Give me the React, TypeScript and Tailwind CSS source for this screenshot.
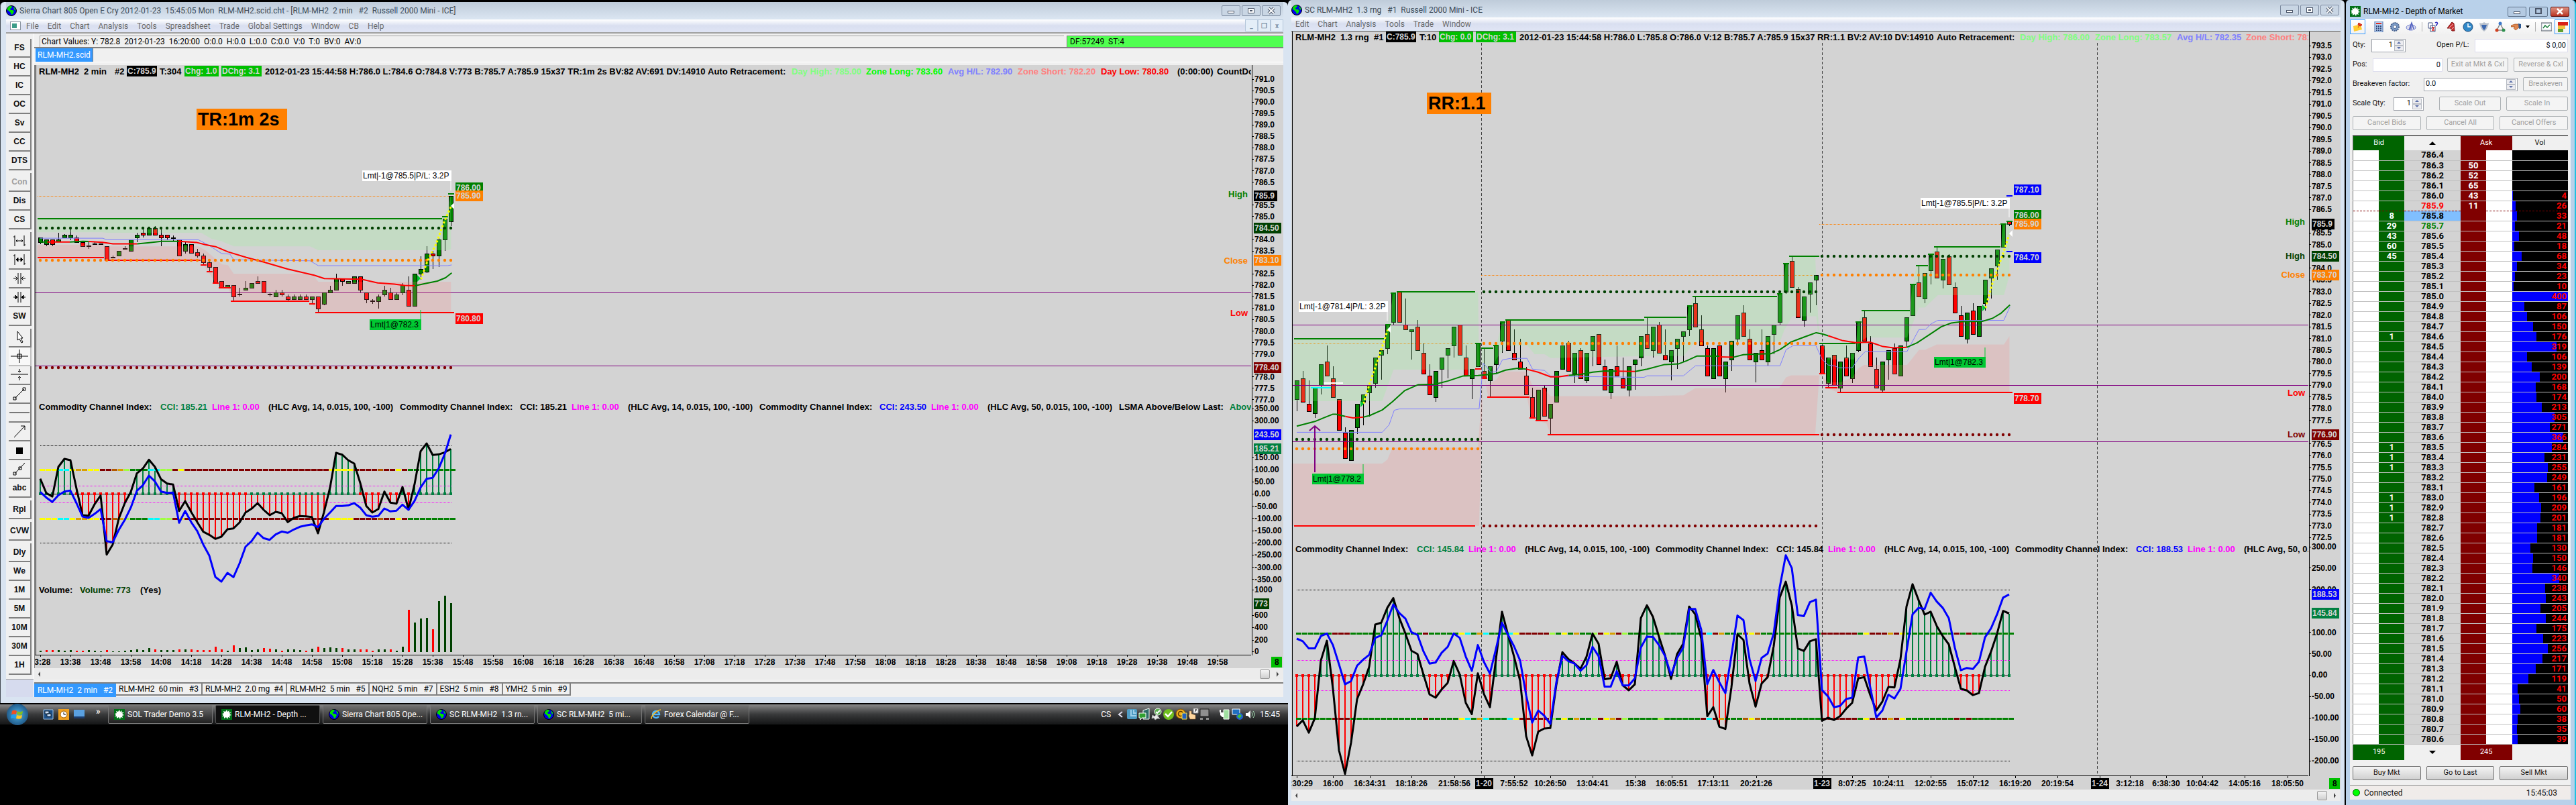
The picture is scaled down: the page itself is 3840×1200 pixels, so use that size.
import type { ReactNode } from "react";

type Map1 = (u: number) => number;

// plot units -> canvas pixels, left chart
const ax: Map1 = (u) => u * 0.6122;
const ay: Map1 = (u) => u * 0.38265;
const acy: Map1 = (u) => 560 + u / 3;
const aBar: Map1 = (i) => 60 + i * 9;

// plot units -> canvas pixels, right chart
const bx: Map1 = (u) => 1910 + u * 0.5102;
const bx2: Map1 = (u) => 2700 + u * 0.5102;
const by: Map1 = (u) => u * 0.38265;
const bcy: Map1 = (u) => 600 + u * 0.38265;
const bBar: Map1 = (i) => 1933 + i * 9;

const nums = (s: string) => s.trim().split(/\s+/).map(Number);

function pts(s: string, fx: Map1, fy: Map1) {
  return s
    .trim()
    .split(/\s+/)
    .map((p) => {
      const [x, y] = p.split(",").map(Number);
      return `${fx(x).toFixed(1)},${fy(y).toFixed(1)}`;
    })
    .join(" ");
}

// colour + body top : body bottom : high : low (0 = same as body)
const CANDLES_A = `g926:944:0:950 g935:952:0:958 r935:952:0:958 g934:943:906:0 g916:926:912:0 g916:926:895:935 r926:944:916:0
r944:960:0:0 r959:961:944:970 r951:952:944:0 r951:952:0:0 r961:1014:0:0 g1003:1004:995:0 g978:997:0:0 g969:970:960:0 g935:978:0:0
g916:926:906:943 r908:915:895:925 g889:915:0:0 r889:915:880:0 r916:926:895:958 r916:926:0:935 r926:927:916:940 r935:997:0:0
g952:978:944:987 r952:987:0:0 r985:996:970:1003 r996:1022:988:1032 r1022:1041:1015:1058 r1041:1102:0:0 r1096:1120:0:0 g1111:1120:0:0
r1111:1156:0:1173 g1147:1148:1120:1156 g1122:1130:1096:0 g1104:1123:0:0 r1096:1104:1076:0 r1096:1140:0:0 r1147:1148:1140:1156
g1140:1157:1130:0 r1140:1148:1130:1156 r1157:1166:1148:1173 g1157:1166:1148:0 g1157:1166:1148:0 r1157:1166:1148:0 g1157:1166:0:1185
r1157:1203:0:1216 g1140:1185:0:1190 g1130:1140:1112:0 g1086:1130:1066:0 r1088:1096:0:1112 g1096:1104:0:0 g1078:1104:0:0
r1078:1130:0:1140 r1140:1166:0:1180 r1173:1174:1166:1185 g1157:1175:1148:1203 g1130:1148:1112:1156 r1140:1166:1122:0
g1148:1166:1140:0 g1112:1140:1104:1150 r1130:1193:1078:0 g1067:1193:0:0 g1049:1067:997:1090 g988:1059:960:1063 r988:997:978:1048
g934:997:925:1040 g852:934:0:978 g764:863:0:880`;

const CANDLES_B = `g1483:1556:0:1601 r1475:1566:1445:0 r1574:1603:1483:0 g1512:1610:0:1627 g1420:1502:0:1537 r1410:1465:1346:0
r1475:1548:1428:0 r1557:1676:0:0 r1686:1786:1664:0 g1676:1793:0:0 g1574:1666:0:1692 g1538:1568:0:1656 g1502:1530:0:1622
g1394:1493:0:1510 g1366:1383:0:1480 g1264:1357:0:1381 g1143:1255:0:1266 r1137:1255:0:0 r1266:1284:1163:0 g1284:1293:0:1400
r1274:1365:1246:0 r1376:1456:1338:0 r1465:1538:1420:0 g1447:1548:0:1565 g1394:1438:0:1510 g1357:1383:0:1473 g1274:1347:0:1393
r1266:1383:0:0 r1394:1465:1346:0 g1438:1475:0:1555 g1337:1428:0:0 r1447:1473:1357:0 g1428:1483:0:1545 g1347:1420:0:1455
g1255:1328:0:1375 r1247:1365:0:0 r1376:1402:1284:0 r1410:1438:1320:0 r1465:1537:1430:0 r1549:1627:1510:0 g1520:1638:0:0
r1512:1621:1502:0 g1574:1630:0:1691 g1447:1566:0:0 g1347:1438:0:0 r1338:1447:1328:0 g1376:1456:0:1492 r1366:1475:1357:0
g1376:1483:0:1492 g1310:1366:0:1428 r1303:1420:0:0 r1428:1519:1400:0 g1438:1530:0:1555 r1428:1465:1346:0 r1475:1511:1393:0
g1428:1519:0:1545 g1402:1420:0:1518 g1310:1394:0:1428 r1302:1357:1237:0 g1274:1365:0:1392 r1266:1375:1255:0 r1383:1402:1284:0
g1365:1410:0:1482 g1321:1357:0:1437 g1293:1310:0:1412 g1190:1284:0:1310 r1182:1273:1155:0 r1285:1347:1228:0 r1357:1465:1346:0
g1357:1475:0:0 r1347:1465:0:0 g1410:1475:0:1528 g1329:1402:0:1445 g1229:1320:0:1345 r1219:1310:1190:0 r1321:1402:1284:0
g1376:1410:0:1490 r1365:1402:1284:0 g1310:1410:0:1425 g1267:1302:0:1380 g1144:1255:0:1266 g1027:1137:0:1145 r1018:1119:998:0
r1128:1237:1118:0 g1156:1247:0:1272 g1102:1145:0:1218 g1073:1090:0:1190 r1347:1455:0:0 g1394:1493:0:1510 r1383:1501:0:0
g1410:1511:0:1528 r1394:1465:1346:0 g1376:1475:0:1491 g1254:1365:0:1372 r1237:1329:1211:0 r1339:1428:1310:0 r1438:1511:1394:0
g1410:1519:0:1528 g1365:1402:0:1480 r1357:1456:1338:0 g1347:1465:0:0 g1238:1329:0:1350 g1110:1229:0:0 r1101:1157:1035:0
g1065:1165:0:1180 g991:1055:0:1108 r981:1084:963:0 g1010:1090:0:1125 r1000:1109:991:0 r1119:1218:1101:0 r1229:1310:1192:0
g1219:1320:0:1337 r1211:1302:1182:0 g1192:1310:0:0 g1091:1182:0:1210 g1046:1083:0:1162 g973:1035:0:1090 g873:962:0:0 r863:873:0:880`;

const CCI_A = nums(`461 525 541 408 372 378 505 624 626 575 536 800 755 640 570 520 437 415 376 408 463 482 487 605 561 610 655 698
712 730 720 687 683 657 612 595 570 600 624 609 615 655 636 628 629 632 705 610 500 345 353 378 393 480 583 612 596 518 568 572 498 598
485 338 303 355 352 343 328`);
const CCI50_A = nums(`520 545 565 535 518 514 570 630 636 618 597 740 745 690 645 590 515 490 447 473 518 524 523 658 605 655 695 755
805 900 921 882 901 840 765 740 702 727 734 710 697 703 688 676 670 665 677 640 612 583 583 580 570 590 624 631 627 594 607 604 577 600
560 500 461 457 415 350 263`);
const CCI_B = nums(`1262 1238 1286 1230 1005 928 1115 1355 1447 1325 1155 1098 1030 865 858 800 762 840 900 967 980 1060 1137 1150 1118
1092 1007 1060 1170 1214 1055 1135 1187 1000 815 905 990 1085 1300 1375 1282 1270 1268 1100 973 1000 1016 1037 990 900 940 1078 1074
1010 1102 1121 1098 840 790 835 912 985 1077 980 940 795 825 920 1222 1187 1263 1272 1110 903 925 1095 1185 1095 1070 950 760 698 790
958 968 930 922 1240 1228 1237 1222 1193 1170 1075 1070 1140 1200 1165 1108 1110 1000 795 708 770 826 815 870 910 942 1030 1115 1122
1140 1132 1030 970 900 812 822`);
const CCI50_B = nums(`920 930 958 958 910 900 945 1020 1098 1085 1025 1002 983 917 907 850 787 820 842 895 905 970 1017 1013 975 952
900 917 990 1045 945 1010 1056 960 858 905 950 1005 1140 1247 1200 1220 1252 1090 987 1008 1017 1045 1023 952 988 1107 1107 1047 1102
1102 1075 955 912 913 945 987 1062 995 955 805 804 885 1097 1042 1090 1132 985 830 848 1000 1085 995 978 900 720 595 645 828 832 778
768 1120 1145 1187 1182 1155 1150 993 990 1110 1227 1200 1138 1153 1115 970 825 800 804 741 775 800 840 955 1043 1034 1038 1010 915
880 825 760 748`);

const TREND_A = "yyyccyooyymmbolgggccllmy" + "m".repeat(24) + "yyyymmmmbmmym" + "g".repeat(8);
const TREND_B =
  "ggggggmmmggggggggggggmgggggycgocgggcymmmmmlgygoggl" + "myomlggggglggggggmcmogggbybgggggggggg" + "mmmmmmgymmmomyggggggggmgmggggggg";
const TICKS_A = "gggggg" + "r".repeat(9) + "g".repeat(8) + "r".repeat(12) + "g".repeat(18) + "rrrrgrrgr" + "g".repeat(7);

const TREND_COLORS: Record<string, string> = {
  y: "#ffff00",
  c: "#00ffff",
  o: "#d9a000",
  m: "#800000",
  b: "#b35a00",
  l: "#a0ff40",
  g: "#008000",
};

// negative = down bar
const VOLUME_A = nums(`5 -8 -8 8 5 8 -5 -5 8 5 2 -8 3 2 5 8 11 8 17 -11 8 8 8 -11 11 -11 -8 -8 -8 -23 -11 5 -29 17 22 8 11 -19 -14 11
-6 11 11 8 -5 14 -23 17 20 17 -17 11 11 -11 -11 -5 11 11 -11 5 23 -188 133 149 152 -101 227 253 218`);

function Candles({ data, bar, fy }: { data: string; bar: Map1; fy: Map1 }) {
  return (
    <g shapeRendering="crispEdges" stroke="#000">
      {data.trim().split(/\s+/).map((c, i) => {
        const [top, bottom, high, low] = c.slice(1).split(":").map(Number);
        const x = bar(i);
        return (
          <g key={i}>
            <line x1={x} x2={x} y1={fy(high || top)} y2={fy(low || bottom)} />
            <rect x={x - 3} y={fy(top)} width={6} height={Math.max(fy(bottom) - fy(top), 1)} fill={c[0] === "g" ? "#008000" : "#ff0000"} />
          </g>
        );
      })}
    </g>
  );
}

function Levels({ items, fx, fy, color }: { items: number[][]; fx: Map1; fy: Map1; color: string }) {
  return (
    <g stroke={color} strokeWidth={2} shapeRendering="crispEdges">
      {items.map(([x1, x2, y], i) => (
        <line key={i} x1={fx(x1)} x2={fx(x2)} y1={fy(y)} y2={fy(y)} />
      ))}
    </g>
  );
}

function Dots({ from, to, bar, y, color }: { from: number; to: number; bar: Map1; y: number; color: string }) {
  return (
    <g fill={color}>
      {Array.from({ length: to - from + 1 }, (_, i) => (
        <circle key={i} cx={bar(from + i)} cy={y} r={2.2} />
      ))}
    </g>
  );
}

function Lines({ items, fx, fy }: { items: [string, string][]; fx: Map1; fy: Map1 }) {
  return (
    <g fill="none" strokeWidth={2} strokeLinejoin="round">
      {items.map(([color, s], i) => (
        <polyline key={i} points={pts(s, fx, fy)} stroke={color} />
      ))}
    </g>
  );
}

function Cci({ a, b, trend, ticks, bar, fy, zero, bands }: {
  a: number[]; b: number[]; trend: string; ticks?: string; bar: Map1; fy: Map1; zero: number; bands: number[];
}) {
  const x0 = bar(0);
  const x1 = bar(a.length - 1);
  const [up2, up1, mUp, mDown, dn1, dn2] = bands;
  const line = (v: number[]) => v.map((y, i) => `${bar(i)},${fy(y).toFixed(1)}`).join(" ");
  return (
    <g>
      <g shapeRendering="crispEdges">
        {[up2, dn2].map((y) => (
          <line key={y} x1={x0} x2={x1 + 1} y1={fy(y)} y2={fy(y)} stroke="#000" strokeDasharray="1 1" />
        ))}
        {a.map((y, i) => (
          <line key={i} x1={bar(i)} x2={bar(i)} y1={fy(zero)} y2={fy(y)} stroke={y < zero ? "#008040" : "#ff0000"} strokeWidth={2} />
        ))}
        <line x1={x0} x2={x1 + 1} y1={fy(zero)} y2={fy(zero)} stroke="#000" />
        {a.map((y, i) => {
          const green = ticks ? ticks[i] === "g" : y < zero;
          return <rect key={i} x={bar(i) - 2} y={fy(zero) - 2} width={4} height={4} fill={green ? "#008040" : "#ff0000"} />;
        })}
        {[mUp, mDown].map((y) => (
          <line key={y} x1={x0} x2={x1 + 1} y1={fy(y)} y2={fy(y)} stroke="#ff00ff" strokeDasharray="1 1" />
        ))}
        {[up1, dn1].map((y) =>
          a.map((_, i) => (
            <rect key={`${y}-${i}`} x={bar(i) - 1} y={fy(y) - 1} width={8} height={3} fill={TREND_COLORS[trend[i] ?? "g"]} />
          ))
        )}
      </g>
      <polyline points={line(a)} fill="none" stroke="#000" strokeWidth={3} strokeLinejoin="round" />
      <polyline points={line(b)} fill="none" stroke="#0000ff" strokeWidth={3} strokeLinejoin="round" />
    </g>
  );
}

function Caption({ y, parts }: { y: number; parts: [number, string, string?][] }) {
  return (
    <g className="text-[13px]">
      {parts.map(([x, text, color], i) => (
        <text key={i} x={x} y={y} fill={color ?? "#000"} xmlSpace="preserve">{text}</text>
      ))}
    </g>
  );
}

function Tag({ x, y, w, bg, fg = "#d3d3d3", children }: { x: number; y: number; w: number; bg: string; fg?: string; children: ReactNode }) {
  return (
    <svg x={x} y={y - 8} width={w} height={16} overflow="hidden">
      <rect width={w} height={16} fill={bg} />
      <text x={1} y={12} fill={fg}>{children}</text>
    </svg>
  );
}

function AxisLabels({ x, items }: { x: number; items: [number, string][] }) {
  return (
    <g>
      {items.map(([y, t]) => (
        <g key={t}>
          <line x1={x - 4} x2={x - 1} y1={y} y2={y} stroke="#000" shapeRendering="crispEdges" />
          <text x={x} y={y + 4}>{t}</text>
        </g>
      ))}
    </g>
  );
}

const SVG_TEXT = "font-['Liberation_Sans',Arial,sans-serif] text-[12px] font-bold";

function SideLabels({ items }: { items: [number, string, string][] }) {
  return (
    <g className="text-[13px]">
      {items.map(([y, t, color]) => (
        <text key={`${t}${y}`} x="100%" dx={-5} y={y} textAnchor="end" fill={color}>{t}</text>
      ))}
    </g>
  );
}

function times(start: number, n: number) {
  return Array.from({ length: n }, (_, i) => {
    const m = start + i * 10;
    return `${Math.floor(m / 60)}:${String(m % 60).padStart(2, "0")}`;
  });
}

function LeftPlot() {
  return (
    <svg className={`h-[899px] min-w-0 flex-1 bg-[#d3d3d3] ${SVG_TEXT}`}>
      <g transform="translate(-52 -97)">
        <Caption
          y={111}
          parts={[
            [58, "RLM-MH2"], [125, "2 min"], [171, "#2"], [238, "T:304"],
            [395, "2012-01-23 15:44:58 H:786.0 L:784.6 O:784.8 V:773 B:785.7 A:785.9 15x37 TR:1m 2s BV:82 AV:691 DV:14910"],
            [1055, "Auto Retracement:"], [1180, "Day High: 785.00", "#80ff80"], [1291, "Zone Long: 783.60", "#00ff00"],
            [1413, "Avg H/L: 782.90", "#8080ff"], [1517, "Zone Short: 782.20", "#ff8080"], [1641, "Day Low: 780.80", "#ff0000"],
            [1755, "(0:00:00)"], [1814, "CountDown Timer:"],
          ]}
        />
        <Tag x={189} y={106} w={45} bg="#000">C:785.9</Tag>
        <Tag x={275} y={106} w={51} bg="#00c000">Chg: 1.0</Tag>
        <Tag x={330} y={106} w={60} bg="#00c000">DChg: 3.1</Tag>

        <rect x={293} y={162} width={135} height={32} fill="#ff8000" />
        <text x={295} y={187} className="text-[27px]">TR:1m 2s</text>

        <g shapeRendering="crispEdges" stroke="#800080" strokeWidth={1}>
          <line x1={52} x2={4000} y1={436} y2={436} />
          <line x1={52} x2={4000} y1={545} y2={545} />
        </g>
        <line x1={56} x2={676} y1={292} y2={292} stroke="#ff8000" strokeDasharray="1 1" shapeRendering="crispEdges" />
        <Candles data={CANDLES_A} bar={aBar} fy={ay} />
        <polygon
          fill="#8cff8c"
          fillOpacity={0.2}
          points={pts("91,852 1075,852 1083,845 1098,760 1098,970 1090,975 775,975 755,960 570,960 540,940 515,930 490,907 260,907 250,905 91,905", ax, ay)}
        />
        <polygon
          fill="#ff8282"
          fillOpacity={0.2}
          points={pts("91,953 250,953 260,960 483,960 500,975 540,1030 555,1033 569,1066 760,1066 775,1098 1098,1098 1098,1217 775,1217 760,1184 750,1173 569,1173 555,1120 535,1120 525,1102 496,1032 485,1014 260,1014 255,1003 91,1003", ax, ay)}
        />
        <Levels fx={ax} fy={ay} color="#008000" items={[[91, 1076, 852], [1076, 1091, 845], [1091, 1106, 755]]} />
        <Levels
          fx={ax}
          fy={ay}
          color="#ff0000"
          items={[
            [91, 253, 1003], [255, 488, 1014], [488, 503, 1032], [503, 518, 1058], [518, 532, 1102],
            [532, 562, 1121], [562, 753, 1173], [753, 768, 1184], [768, 1106, 1217],
          ]}
        />
        <polyline
          fill="none"
          stroke="#8080ff"
          points={pts("98,928 250,928 260,934 483,934 510,957 540,988 560,990 569,1012 755,1016 775,1035 1090,1035 1100,1032", ax, ay)}
        />
        <Lines
          fx={ax}
          fy={ay}
          items={[
            ["#008000", "98,943 115,943"],
            ["#ff0000", "115,943 170,943"],
            ["#008000", "170,943 202,940 216,941"],
            ["#ff0000", "216,941 250,944 275,950 334,950"],
            ["#008000", "334,950 360,946 393,940 437,940"],
            ["#ff0000", "437,940 455,942 480,945 500,953 525,961 555,981 600,1003 640,1020 700,1048 765,1072 790,1085 880,1088 920,1102 960,1107 985,1112 1010,1113"],
            ["#008000", "1010,1113 1035,1105 1065,1095 1085,1082 1100,1063"],
          ]}
        />
        <Dots from={0} to={68} bar={aBar} y={340} color="#004000" />
        <Dots from={0} to={68} bar={aBar} y={388} color="#ff8000" />
        <Dots from={0} to={68} bar={aBar} y={548} color="#800000" />
        <polyline fill="none" stroke="#ffff00" strokeWidth={3} strokeDasharray="3 3" points={pts("1025,1088 1040,1020 1062,950 1080,870 1098,805", ax, ay)} />
        <path d="M622 410l5 5-5 5z" fill="#00c832" />
        <path d="M677 302v10l-5-5z" fill="#fff" />
        <line x1={672} x2={672} y1={269} y2={284} stroke="#fff" />
        <line x1={627} x2={627} y1={462} y2={478} stroke="#00c832" />
        <g className="font-normal">
          <Tag x={540} y={262} w={133} bg="#fff" fg="#000">Lmt|-1@785.5|P/L: 3.2P</Tag>
          <Tag x={551} y={484} w={77} bg="#00c832" fg="#000">Lmt|1@782.3</Tag>
        </g>
        <Tag x={679} y={280} w={41} bg="#008000">786.00</Tag>
        <Tag x={679} y={292} w={41} bg="#ff8000">785.90</Tag>
        <Tag x={679} y={475} w={41} bg="#ff0000">780.80</Tag>

        <Caption
          y={611}
          parts={[
            [58, "Commodity Channel Index:"], [239, "CCI: 185.21", "#008040"], [316, "Line 1: 0.00", "#ff00ff"], [400, "(HLC Avg, 14, 0.015, 100, -100)"],
            [596, "Commodity Channel Index:"], [775, "CCI: 185.21"], [852, "Line 1: 0.00", "#ff00ff"], [936, "(HLC Avg, 14, 0.015, 100, -100)"],
            [1132, "Commodity Channel Index:"], [1311, "CCI: 243.50", "#0000ff"], [1388, "Line 1: 0.00", "#ff00ff"], [1472, "(HLC Avg, 50, 0.015, 100, -100)"],
            [1668, "LSMA Above/Below Last:"], [1833, "Above", "#008040"],
          ]}
        />
        <Cci a={CCI_A} b={CCI50_A} trend={TREND_A} ticks={TICKS_A} bar={aBar} fy={acy} zero={529} bands={[313, 421, 493, 568, 640, 748]} />

        <Caption y={884} parts={[[58, "Volume:"], [119, "Volume: 773", "#004000"], [209, "(Yes)"]]} />
        <g shapeRendering="crispEdges">
          {VOLUME_A.map((v, i) => (
            <rect key={i} x={aBar(i) - 1} y={972 - Math.abs(v) / 3} width={3} height={Math.abs(v) / 3} fill={v < 0 ? "#ff0000" : "#004000"} />
          ))}
        </g>
        <line x1={52} x2={4000} y1={976} y2={976} stroke="#000" shapeRendering="crispEdges" />
        <g textAnchor="middle">
          {times(13 * 60 + 28, 40).map((t, i) => (
            <g key={t}>
              <line x1={60 + i * 45} x2={60 + i * 45} y1={976} y2={979} stroke="#000" shapeRendering="crispEdges" />
              <text x={60 + i * 45} y={991}>{t}</text>
            </g>
          ))}
        </g>
        <line x1={53} x2={53} y1={97} y2={976} stroke="#000" shapeRendering="crispEdges" />
      </g>
      <SideLabels items={[[197, "High", "#008000"], [296, "Close", "#ff8000"], [374, "Low", "#ff0000"]]} />
    </svg>
  );
}

function LeftAxis() {
  const prices: [number, string][] = Array.from({ length: 29 }, (_, i) => [118 + i * 17.07, (791 - i * 0.5).toFixed(1)] as [number, string]);
  const hidden = ["786.0", "784.5", "783.0", "778.5"];
  const cci: [number, string][] = Array.from({ length: 15 }, (_, i) => [609 + i * 18.2, (350 - i * 50).toFixed(2)] as [number, string]);
  return (
    <svg className={`h-[899px] w-12 bg-[#d3d3d3] ${SVG_TEXT}`}>
      <g transform="translate(-1863 -97)">
        <line x1={1864} x2={1864} y1={97} y2={977} stroke="#000" shapeRendering="crispEdges" />
        <AxisLabels x={1868} items={prices.filter(([, t]) => !hidden.includes(t))} />
        <AxisLabels x={1868} items={cci.filter(([, t]) => t !== "250.00" && t !== "200.00")} />
        <AxisLabels x={1868} items={[[879, "1000"], [917, "600"], [935, "400"], [954, "200"], [971, "0"]]} />
        <Tag x={1867} y={292} w={35} bg="#000">785.9</Tag>
        <Tag x={1867} y={340} w={41} bg="#004000">784.50</Tag>
        <Tag x={1867} y={388} w={41} bg="#ff8000">783.10</Tag>
        <Tag x={1867} y={548} w={41} bg="#800000">778.40</Tag>
        <Tag x={1867} y={648} w={41} bg="#0000ff">243.50</Tag>
        <Tag x={1867} y={669} w={41} bg="#008040">185.21</Tag>
        <Tag x={1867} y={900} w={23} bg="#004000">773</Tag>
        <rect x={1893} y={979} width={16} height={16} fill="#00c000" />
        <text x={1898} y={991}>8</text>
      </g>
    </svg>
  );
}

const TIMES_B: [number, string, boolean?][] = [
  [1933, "15:30:29"], [1987, "16:00"], [2042, "16:34:31"], [2104, "18:18:26"], [2168, "21:58:56"], [2212, "1-20", true],
  [2257, "7:55:52"], [2311, "10:26:50"], [2374, "13:04:41"], [2438, "15:38"], [2492, "16:05:51"], [2554, "17:13:11"],
  [2618, "20:21:26"], [2716, "1-23", true], [2761, "8:07:25"], [2815, "10:24:11"], [2878, "12:02:55"], [2941, "15:07:12"],
  [3004, "16:19:20"], [3067, "20:19:54"], [3130, "1-24", true], [3175, "3:12:18"], [3229, "6:38:30"], [3283, "10:04:42"],
  [3346, "14:05:16"], [3410, "18:05:50"],
];

function RightPlot() {
  return (
    <svg className={`h-[1130px] min-w-0 flex-1 bg-[#d3d3d3] ${SVG_TEXT}`}>
      <g transform="translate(-1925 -47)">
        <g stroke="#404040" strokeDasharray="4 3" shapeRendering="crispEdges">
          {[2208, 2716, 3126].map((x) => (
            <line key={x} x1={x} x2={x} y1={64} y2={1156} />
          ))}
        </g>
        <Caption
          y={60}
          parts={[
            [1931, "RLM-MH2"], [1998, "1.3 rng"], [2048, "#1"], [2116, "T:10"],
            [2265, "2012-01-23 15:44:58 H:786.0 L:785.8 O:786.0 V:12 B:785.7 A:785.9 15x37 RR:1.1 BV:2 AV:10 DV:14910"],
            [2887, "Auto Retracement:"], [3011, "Day High: 786.00", "#80ff80"], [3123, "Zone Long: 783.57", "#80ff80"],
            [3245, "Avg H/L: 782.35", "#8080ff"], [3348, "Zone Short: 781.13", "#ff8080"],
          ]}
        />
        <Tag x={2066} y={55} w={45} bg="#000">C:785.9</Tag>
        <Tag x={2145} y={55} w={51} bg="#00c000">Chg: 0.0</Tag>
        <Tag x={2200} y={55} w={60} bg="#00c000">DChg: 3.1</Tag>
        <rect x={2127} y={138} width={96} height={32} fill="#ff8000" />
        <text x={2129} y={163} className="text-[27px]">RR:1.1</text>

        <g stroke="#ff8000" strokeDasharray="1 1" shapeRendering="crispEdges">
          <line x1={1929} x2={2205} y1={512} y2={512} />
          <line x1={2208} x2={2712} y1={410} y2={410} />
          <line x1={2712} x2={3000} y1={334} y2={334} />
        </g>
        <Candles data={CANDLES_B} bar={bBar} fy={by} />
        <g fill="#8cff8c" fillOpacity={0.2}>
          <polygon points={pts("30,1319 300,1319 311,1264 328,1143 340,1137 575,1137 578,1440 328,1440 295,1563 30,1563", bx, by)} />
          <polygon points={pts("585,1357 610,1357 628,1345 646,1255 660,1247 1060,1247 1069,1237 1185,1237 1193,1190 1205,1155 1450,1155 1460,1140 1475,1025 1490,998 1560,998 1572,1330 1563,1232 1493,1232 1470,1285 1457,1330 1210,1330 1175,1387 1063,1387 787,1395 769,1380 740,1380 720,1347 660,1347 630,1395 600,1470 585,1450", bx, by)} />
          <polygon points={pts("24,1338 130,1338 138,1254 150,1211 287,1211 297,1108 308,1035 341,1035 350,990 360,963 553,963 562,873 579,862 579,1073 563,1150 370,1150 332,1198 315,1198 280,1315 160,1315 138,1340 125,1400 50,1400 32,1340", bx2, by)} />
        </g>
        <g fill="#ff8282" fillOpacity={0.2}>
          <polygon points={pts("30,1806 295,1806 310,1790 325,1744 575,1744 590,1450 578,2048 30,2048", bx, by)} />
          <polygon points={pts("590,1450 600,1500 628,1480 645,1447 718,1447 734,1505 765,1510 787,1543 1060,1543 1175,1540 1210,1512 1455,1512 1475,1470 1490,1462 1572,1462 1560,1693 787,1693 775,1650 730,1627 718,1547 605,1547", bx, by)} />
          <polygon points={pts("24,1455 50,1490 85,1490 120,1470 138,1435 155,1422 280,1422 315,1363 332,1363 367,1342 563,1342 579,1310 579,1528 77,1528 42,1510 32,1460", bx2, by)} />
        </g>
        <g stroke="#800080" shapeRendering="crispEdges">
          <line x1={1926} x2={4000} y1={484} y2={484} />
          <line x1={1926} x2={4000} y1={574} y2={574} />
          <line x1={1926} x2={4000} y1={658} y2={658} />
        </g>
        <Levels
          fx={bx}
          fy={by}
          color="#008000"
          items={[
            [37, 300, 1319], [303, 319, 1264], [320, 336, 1143], [337, 566, 1137], [567, 584, 1337], [585, 619, 1357], [620, 636, 1345],
            [638, 654, 1254], [655, 1060, 1247], [1060, 1184, 1237], [1185, 1201, 1191], [1201, 1448, 1155], [1449, 1465, 1144],
            [1467, 1483, 1027], [1484, 1572, 998],
          ]}
        />
        <Levels
          fx={bx2}
          fy={by}
          color="#008000"
          items={[
            [24, 130, 1338], [130, 147, 1254], [147, 288, 1210], [288, 305, 1108], [305, 341, 1035], [341, 358, 990],
            [359, 553, 962], [553, 570, 872], [571, 588, 862],
          ]}
        />
        <Levels
          fx={bx}
          fy={by}
          color="#ff0000"
          items={[[37, 566, 2048], [566, 585, 1437], [585, 602, 1474], [602, 725, 1547], [725, 743, 1627], [743, 778, 1638], [778, 1572, 1693]]}
        />
        <Levels fx={bx2} fy={by} color="#ff0000" items={[[24, 41, 1455], [41, 76, 1510], [76, 588, 1528]]} />
        <Levels fx={bx2} fy={by} color="#0000ff" items={[[570, 588, 763], [570, 588, 980]]} />
        <Levels fx={bx} fy={by} color="#ffffff" items={[[123, 180, 1492]]} />
        <Levels fx={bx} fy={by} color="#00ffff" items={[[86, 146, 1511]]} />
        <g fill="none" stroke="#8080ff">
          <polyline points={pts("45,1684 295,1684 315,1655 330,1598 345,1593 578,1593 590,1415 600,1430 612,1450 628,1448 646,1402 670,1396 718,1396 734,1438 769,1443 787,1465 1060,1470 1069,1464 1175,1464 1210,1425 1457,1425 1475,1362 1495,1347 1562,1346 1580,1400 1598,1422 1618,1426 1628,1433 1668,1433 1688,1395 1706,1370 1828,1370 1863,1284 1883,1283 1898,1262 1918,1248 2111,1248 2129,1195", bx, by)} />
        </g>
        <Lines
          fx={bx}
          fy={by}
          items={[
            ["#008000", "45,1660 98,1642 125,1627 150,1614 160,1614 187,1622"],
            ["#ff0000", "187,1622 210,1628 240,1625"],
            ["#008000", "240,1625 258,1619 295,1597 325,1565 360,1522 399,1499 450,1497 487,1484 530,1465 575,1463 610,1458 628,1455 655,1442 690,1435 716,1438"],
            ["#ff0000", "716,1438 750,1450 787,1468 810,1468 840,1462"],
            ["#008000", "840,1462 875,1458 910,1450 946,1445 980,1446"],
            ["#ff0000", "980,1446 1034,1447"],
            ["#008000", "1034,1447 1069,1438 1120,1420 1160,1418 1185,1405 1215,1387 1280,1388"],
            ["#ff0000", "1280,1390 1320,1392"],
            ["#008000", "1320,1392 1350,1382 1390,1379 1430,1378 1457,1362 1490,1332 1530,1312 1563,1296 1580,1301 1598,1308"],
            ["#ff0000", "1598,1308 1638,1326 1678,1335 1721,1333 1758,1350 1788,1355 1828,1353"],
            ["#008000", "1828,1353 1858,1335 1898,1300 1928,1273 1958,1258 1988,1253 2048,1252 2078,1240 2103,1220 2129,1188"],
          ]}
        />
        <Dots from={0} to={30} bar={bBar} y={655} color="#004000" />
        <Dots from={31} to={86} bar={bBar} y={435} color="#004000" />
        <Dots from={87} to={118} bar={bBar} y={382} color="#004000" />
        <Dots from={0} to={30} bar={bBar} y={669} color="#ff8000" />
        <Dots from={31} to={86} bar={bBar} y={512} color="#ff8000" />
        <Dots from={87} to={118} bar={bBar} y={410} color="#ff8000" />
        <Dots from={31} to={86} bar={bBar} y={784} color="#800000" />
        <Dots from={87} to={118} bar={bBar} y={648} color="#800000" />
        <g fill="none" stroke="#ffff00" strokeWidth={3} strokeDasharray="3 3">
          <polyline points={pts("240,1573 258,1495 275,1430 295,1350 311,1285", bx, by)} />
          <polyline points={pts("509,1200 530,1100 560,990 578,915", bx2, by)} />
        </g>
        <path d="M2028 597l5 5-5 5zM2955 454l5 5-5 5z" fill="#00c832" />
        <path d="M2073 486v10l-5-5zM3000 343v10l-5-5z" fill="#fff" />
        <path d="M2068 464v14M2995 310v14" stroke="#fff" />
        <path d="M2032 692v16M2959 518v16" stroke="#00c832" />
        <path d="M1960 704V635M1952 642l8-7 8 7" fill="none" stroke="#800080" strokeWidth={2} />
        <g className="font-normal">
          <Tag x={1936} y={457} w={133} bg="#fff" fg="#000">Lmt|-1@781.4|P/L: 3.2P</Tag>
          <Tag x={2863} y={303} w={133} bg="#fff" fg="#000">Lmt|-1@785.5|P/L: 3.2P</Tag>
          <Tag x={1956} y={714} w={77} bg="#00c832" fg="#000">Lmt|1@778.2</Tag>
          <Tag x={2883} y={540} w={77} bg="#00c832" fg="#000">Lmt|1@782.3</Tag>
        </g>
        <Tag x={3002} y={283} w={41} bg="#0000ff">787.10</Tag>
        <Tag x={3002} y={321} w={41} bg="#008000">786.00</Tag>
        <Tag x={3002} y={334} w={41} bg="#ff8000">785.90</Tag>
        <Tag x={3002} y={384} w={41} bg="#0000ff">784.70</Tag>
        <Tag x={3002} y={594} w={41} bg="#ff0000">778.70</Tag>

        <Caption
          y={823}
          parts={[
            [1931, "Commodity Channel Index:"], [2112, "CCI: 145.84", "#008040"], [2189, "Line 1: 0.00", "#ff00ff"], [2273, "(HLC Avg, 14, 0.015, 100, -100)"],
            [2468, "Commodity Channel Index:"], [2648, "CCI: 145.84"], [2725, "Line 1: 0.00", "#ff00ff"], [2809, "(HLC Avg, 14, 0.015, 100, -100)"],
            [3004, "Commodity Channel Index:"], [3184, "CCI: 188.53", "#0000ff"], [3261, "Line 1: 0.00", "#ff00ff"], [3345, "(HLC Avg, 50, 0.015, 100, -100)"],
          ]}
        />
        <Cci a={CCI_B} b={CCI50_B} trend={TREND_B} bar={bBar} fy={bcy} zero={1064} bands={[730, 898, 1005, 1122, 1230, 1396]} />

        <line x1={1925} x2={4000} y1={1156} y2={1156} stroke="#000" shapeRendering="crispEdges" />
        <g textAnchor="middle">
          {TIMES_B.map(([x, t, boxed]) => (
            <g key={t}>
              <line x1={x} x2={x} y1={1156} y2={1160} stroke="#000" shapeRendering="crispEdges" />
              {boxed && <rect x={x - 13} y={1160} width={27} height={16} fill="#000" />}
              <text x={x} y={1172} fill={boxed ? "#d3d3d3" : "#000"}>{t}</text>
            </g>
          ))}
        </g>
        <line x1={1926} x2={1926} y1={47} y2={1156} stroke="#000" shapeRendering="crispEdges" />
      </g>
      <SideLabels
        items={[[288, "High", "#008000"], [339, "High", "#004000"], [367, "Close", "#ff8000"], [543, "Low", "#ff0000"], [605, "Low", "#800000"]]}
      />
    </svg>
  );
}

function RightAxis() {
  const prices: [number, string][] = Array.from({ length: 43 }, (_, i) => [68 + i * 17.46, (793.5 - i * 0.5).toFixed(1)] as [number, string]);
  const hidden = ["786.0", "784.5", "777.0"];
  const cci: [number, string][] = Array.from({ length: 11 }, (_, i) => [815 + i * 31.9, (300 - i * 50).toFixed(2)] as [number, string]);
  return (
    <svg className={`h-[1130px] w-12 bg-[#d3d3d3] ${SVG_TEXT}`}>
      <g transform="translate(-3441 -47)">
        <line x1={3442} x2={3442} y1={47} y2={1157} stroke="#000" shapeRendering="crispEdges" />
        <AxisLabels x={3446} items={prices.filter(([, t]) => !hidden.includes(t))} />
        <AxisLabels x={3446} items={cci.filter(([, t]) => t !== "150.00")} />
        <Tag x={3446} y={334} w={34} bg="#000">785.9</Tag>
        <Tag x={3446} y={382} w={41} bg="#004000">784.50</Tag>
        <Tag x={3446} y={410} w={41} bg="#ff8000">783.70</Tag>
        <Tag x={3446} y={648} w={41} bg="#800000">776.90</Tag>
        <Tag x={3446} y={886} w={41} bg="#0000ff">188.53</Tag>
        <Tag x={3446} y={914} w={41} bg="#008040">145.84</Tag>
        <rect x={3472} y={1160} width={16} height={16} fill="#00c000" />
        <text x={3477} y={1172}>8</text>
      </g>
    </svg>
  );
}

function Globe() {
  return (
    <svg viewBox="0 0 16 16" className="size-4 shrink-0">
      <circle cx="8" cy="8" r="7.5" fill="#0000f0" stroke="#000" />
      <path d="M2 4l3-3 3 0 1 2-3 2 1 2 3 0 2 2-2 4-2 1-1-3-3-3-2-1zM11 2l3 3 0 3-2-2z" fill="#00e000" />
    </svg>
  );
}

function Burst() {
  return (
    <svg viewBox="0 0 16 16" className="size-4 shrink-0">
      <rect width="16" height="16" fill="#007018" />
      <path d="M8 1l1 3 3-2-1 3 4 0-3 2 3 2-3 1 1 3-3-1-1 3-2-3-3 2 0-3-3 0 2-2-2-2 3-1-1-3 3 1z" fill="#fff" />
    </svg>
  );
}

function CaptionButtons() {
  const cls = "flex h-4 w-7 items-center justify-center rounded-xs border border-[#7d8ba0] bg-[#c9d6e4]";
  return (
    <div className="flex gap-0.5">
      <button aria-label="Minimize" className={cls}>
        <svg className="h-3 w-3"><rect x="1.5" y="6.5" width="9" height="3" fill="#fff" stroke="#4a5568" /></svg>
      </button>
      <button aria-label="Maximize" className={cls}>
        <svg className="h-3 w-3"><rect x="1.5" y="2.5" width="9" height="7" fill="#fff" stroke="#4a5568" /><rect x="4.5" y="5.5" width="3" height="1" stroke="#4a5568" /></svg>
      </button>
      <button aria-label="Close" className={cls}>
        <svg className="h-3 w-3"><path d="M2 2l8 8M10 2l-8 8" stroke="#4a5568" strokeWidth="4" /><path d="M2 2l8 8M10 2l-8 8" stroke="#fff" strokeWidth="2" /></svg>
      </button>
    </div>
  );
}

function HScroll() {
  return (
    <div className="flex h-[17px] items-center justify-between bg-[#ececec] px-1">
      <svg className="h-2 w-2"><path d="M5 0v8L2 4z" fill="#404040" /></svg>
      <div className="flex items-center gap-2">
        <div className="h-[14px] w-[15px] rounded-xs border border-[#979797] bg-linear-to-b from-[#f4f4f4] to-[#d0d0d0]" />
        <svg className="h-2 w-2"><path d="M2 0v8L5 4z" fill="#404040" /></svg>
      </div>
    </div>
  );
}

const P = { fill: "none", stroke: "#000" };

const TOOL_GROUPS: { label: string; icon?: ReactNode; muted?: boolean; pressed?: boolean }[][] = [
  ["FS", "HC", "IC", "OC", "Sv", "CC", "DTS"].map((label) => ({ label })),
  [{ label: "Con", muted: true }, { label: "Dis" }, { label: "CS" }],
  [
    { label: "Widen bars", icon: <path d="M3 2v16M17 2v16M1 4h2M17 16h2M5 10h10M7 8l-2 2 2 2M13 8l2 2-2 2" {...P} /> },
    { label: "Widen spacing", icon: <path d="M3 2v16M17 2v16M1 4h2M17 16h2M5 10h10M8 7l-3 3 3 3zM12 7l3 3-3 3z" stroke="#000" /> },
    { label: "Narrow bars", icon: <path d="M8 2v16M12 2v16M1 10h5M14 10h5M4 7l3 3-3 3M16 7l-3 3 3 3" {...P} /> },
    { label: "Narrow spacing", icon: <path d="M8 2v16M12 2v16M1 10h5M14 10h5M4 7l3 3-3 3zM16 7l-3 3 3 3z" stroke="#000" /> },
    { label: "SW" },
  ],
  [
    { label: "Pointer", icon: <path d="M7 1v13l3-2 3 6 2-1-3-6h3z" fill="#fff" stroke="#000" /> },
    { label: "Crosshair", pressed: true, icon: <path d="M10 0v20M-3 10h26M7 7h6v6H7z" {...P} /> },
    { label: "Horizontal cursor", icon: <path d="M-3 9h26M10 1v5M8 4l2 2 2-2M10 18v-6M8 14l2-2 2 2" {...P} /> },
    { label: "Line", icon: <path d="M3 17L17 3M1 15h4v4H1zM15 1h4v4h-4z" {...P} /> },
    { label: "Horizontal line", icon: <path d="M-5 10h30" {...P} /> },
    { label: "Arrow", icon: <path d="M2 19L18 2M12 2h6v6" {...P} /> },
    { label: "Marker", icon: <rect x="5" y="6" width="10" height="10" /> },
    { label: "Extended line", icon: <path d="M3 17L18 1M1 15h4v4H1zM9 7h4v4H9z" {...P} /> },
    { label: "abc" },
  ],
  [{ label: "Rpl" }],
  [{ label: "CVW" }],
  ["Dly", "We", "1M", "5M", "10M", "30M", "1H"].map((label) => ({ label })),
];

function ToolRail() {
  return (
    <div className="flex w-[42px] flex-col border-r border-white bg-[#f0f0f0] pt-2 pl-1 font-['Liberation_Sans',Arial,sans-serif] text-[12px] font-bold">
      <div className="flex flex-col gap-1">
        {TOOL_GROUPS.map((group, g) => (
          <div key={g} className="flex flex-col">
            {group.map(({ label, icon, muted, pressed }) => (
              <button
                key={label}
                aria-label={label}
                className={`flex h-7 w-[34px] items-center justify-center overflow-hidden border-r-2 border-b-2 ${
                  pressed ? "border-[#c0c0c0] bg-[#f8f8f8]" : "border-[#808080] bg-[#f0f0f0]"
                } ${muted ? "text-[#a0a0a0]" : "text-[#111]"}`}
              >
                {icon ? <svg viewBox="0 0 20 20" className="size-5 overflow-visible">{icon}</svg> : label}
              </button>
            ))}
          </div>
        ))}
      </div>
      <div className="mt-1.5 -ml-1 flex-1 border-t border-[#a0a0a0] bg-[#d6dbee]" />
    </div>
  );
}

const UI = "font-[Roboto,'Open_Sans',sans-serif] text-[12px]";

function MenuBar({ items, children }: { items: string[]; children?: ReactNode }) {
  return (
    <nav className="flex h-[19px] items-center bg-linear-to-b from-white via-[#d9dff0] to-[#e0e5f5] text-[#6d6d6d]">
      {children}
      <div className="flex gap-[13px]">
        {items.map((m) => (
          <button key={m}>{m}</button>
        ))}
      </div>
    </nav>
  );
}

const SHEETS = ["RLM-MH2  60 min   #3", "RLM-MH2  2.0 mg  #4", "RLM-MH2  5 min   #5", "NQH2  5 min   #7", "ESH2  5 min   #8", "YMH2  5 min   #9"];

function LeftWindow() {
  return (
    <section className="mt-[3px] flex flex-col rounded-t-md border-l border-[#404850] bg-[#d9e4f1] pr-[7px] pl-2">
      <header className="flex h-[26px] items-center justify-between bg-linear-to-b from-[#bfccda] to-[#dbe6f2] pr-1 text-[#3c4a57]">
        <h1 className="flex items-center gap-1 whitespace-pre">
          <Globe />
          Sierra Chart 805 Open E Cry 2012-01-23  15:45:05 Mon  RLM-MH2.scid.cht - [RLM-MH2  2 min   #2  Russell 2000 Mini - ICE]
        </h1>
        <CaptionButtons />
      </header>
      <div className="flex bg-[#e4e8f5]">
        <div className="flex-1">
          <MenuBar items={["File", "Edit", "Chart", "Analysis", "Tools", "Spreadsheet", "Trade", "Global Settings", "Window", "CB", "Help"]}>
            <svg viewBox="0 0 16 14" className="mr-2 ml-1.5 h-3.5 w-4">
              <rect x="0.5" y="0.5" width="15" height="12" fill="#fff" stroke="#8a94a0" />
              <rect x="3" y="3" width="7" height="7" fill="#3c9c88" />
            </svg>
          </MenuBar>
        </div>
        <div className="flex text-[10px] font-bold text-[#7d93a8]">
          {["_", "❐", "x"].map((t) => (
            <button key={t} className="flex h-[18px] w-[19px] items-center justify-center border border-[#b4c6da] bg-[#e4eef8]">{t}</button>
          ))}
        </div>
      </div>
      <div className="flex border-t-2 border-[#a0a0a0] bg-[#f0f0f0]">
        <ToolRail />
        <div className="flex min-w-0 flex-1 flex-col">
          <div className="flex gap-1 pt-[3px] pl-2 leading-4">
            <p className="h-[17px] flex-1 overflow-hidden border-t border-l border-[#a0a0a0] pl-0.5 whitespace-pre">Chart Values: Y: 782.8  2012-01-23  16:20:00  O:0.0  H:0.0  L:0.0  C:0.0  V:0  T:0  BV:0  AV:0</p>
            <p className="h-[17px] w-[323px] overflow-hidden border-t border-l border-[#808080] bg-[#50ff50] pl-1 whitespace-pre">DF:57249  ST:4</p>
          </div>
          <div className="mb-1 h-[23px] border-t-2 border-b border-[#808080] border-b-white pl-0.5">
            <button className="h-5 w-[86px] border-r border-[#808080] bg-[#3399ff] text-white">RLM-MH2.scid</button>
          </div>
          <div className="flex border-l border-[#808080]">
            <LeftPlot />
            <LeftAxis />
          </div>
          <HScroll />
          <div className="mt-1 flex h-[22px] border-t-2 border-[#808080] whitespace-pre">
            <button className="h-5 w-[122px] bg-[#3399ff] text-white">RLM-MH2  2 min   #2</button>
            {SHEETS.map((s) => (
              <button key={s} className="h-[18px] border-r-2 border-b-2 border-[#808080] px-1 leading-4">{s}</button>
            ))}
          </div>
        </div>
      </div>
      <div className="h-[9px] bg-[#d9e4f1]" />
    </section>
  );
}

function MiddleWindow() {
  return (
    <section className="flex min-w-0 flex-1 flex-col rounded-t-md bg-[#d9e4f1] pr-1.5 pl-[5px]">
      <header className="flex h-[26px] items-center justify-between bg-linear-to-b from-[#bfccda] to-[#dbe6f2] pt-2 pr-0.5 pb-1 text-[#3c4a57]">
        <h1 className="flex items-center gap-1 whitespace-pre">
          <Globe />
          SC RLM-MH2  1.3 rng   #1  Russell 2000 Mini - ICE
        </h1>
        <CaptionButtons />
      </header>
      <div className="pb-px">
        <MenuBar items={["Edit", "Chart", "Analysis", "Tools", "Trade", "Window"]}>
          <span className="w-1.5" />
        </MenuBar>
      </div>
      <div className="flex border-t border-[#606060]">
        <RightPlot />
        <RightAxis />
      </div>
      <HScroll />
    </section>
  );
}

const TASKS: [string, "sol" | "globe" | "ie"][] = [
  ["SOL Trader Demo 3.5", "sol"],
  ["RLM-MH2 - Depth ...", "sol"],
  ["Sierra Chart 805 Ope...", "globe"],
  ["SC RLM-MH2  1.3 rn...", "globe"],
  ["SC RLM-MH2  5 mi...", "globe"],
  ["Forex Calendar @ F...", "ie"],
];

function IeIcon() {
  return (
    <svg viewBox="0 0 16 16" className="size-4 shrink-0">
      <path d="M3 8h10a5 5 0 1 0-1 3" fill="none" stroke="#4db8ff" strokeWidth="2.5" />
      <path d="M1 15C0 11 8 2 15 1" fill="none" stroke="#ffc020" strokeWidth="1.5" />
    </svg>
  );
}

function Tray() {
  return (
    <svg viewBox="0 0 192 20" className="h-5 w-48 shrink-0">
      <path d="M9 6L4 10l5 4" fill="none" stroke="#e0e0f0" strokeWidth="2" />
      <rect x="16" y="2" width="15" height="15" rx="2" fill="#4f9cc4" />
      <path d="M22 3v9h8M26 3v5h4" fill="none" stroke="#9fd0ea" strokeWidth="2" />
      <path d="M40 4l9-3v16h-9z" fill="#2f6d68" stroke="#fff" />
      <path d="M34 8h10v7h-6l-2 3v-3h-2z" fill="#30a030" stroke="#fff" />
      <path d="M54 11l3 2 3-3 3 4 2 2-4 0-3 2-2-3-3 1z" fill="#e8e8e8" stroke="#aaa" />
      <circle cx="62" cy="6" r="5" fill="#5cb050" stroke="#fff" />
      <path d="M59 6l2 2 4-4" fill="none" stroke="#fff" strokeWidth="2" />
      <circle cx="78" cy="10" r="8" fill="#70c020" />
      <path d="M73 9l4 4 6-7" fill="none" stroke="#fff" strokeWidth="2.5" />
      <circle cx="96" cy="9" r="7" fill="#f0b020" stroke="#7a4a00" />
      <circle cx="96" cy="9" r="3.5" fill="none" stroke="#5a3a00" strokeWidth="1.5" />
      <path d="M98 8h7v9h-7z" fill="#2060c0" stroke="#ffe040" />
      <path d="M109 10V5l3 0v4l6 2v6h-8l-2-5z" fill="#ffd8a0" stroke="#b07030" strokeWidth="0.5" />
      <path d="M115 1h7v7h-7z" fill="#fff" stroke="#888" />
      <path d="M117 6l3-3h-3" fill="none" stroke="#000" />
      <path d="M125 2h13v11h-13z" fill="#909090" stroke="#202020" />
      <path d="M125 15h4v3h-4zM134 15h4v3h-4z" fill="#909090" />
      <path d="M154 3h2v4h4V3h2v4h1v4l-3 3h-2l-3-3V7h-1z" fill="#fff" />
      <path d="M160 3h8v14h-8z" fill="#a0e0a0" stroke="#fff" />
      <path d="M173 2h11v8h-11z" fill="#2070c0" stroke="#fff" />
      <circle cx="184" cy="13" r="5" fill="#2060d0" />
      <path d="M180 13l4-4 3 3-3 4z" fill="#40c040" />
    </svg>
  );
}

function Taskbar() {
  return (
    <footer className="mt-0.5 flex h-[30px] items-center bg-linear-to-b from-[#8a8a8a] via-[#38393a] to-[#151617] text-white">
      <button aria-label="Start" className="ml-2.5 flex size-8 shrink-0 items-center justify-center rounded-full bg-radial from-[#4fb4e8] to-[#123a66]">
        <svg viewBox="0 0 20 20" className="size-5">
          <path d="M2 5c3-2 5-1 7 0L8 10C6 9 4 9 1 10z" fill="#f05020" />
          <path d="M10 5c3 2 5 1 8 0l-1 5c-3 1-5 1-8 0z" fill="#80c020" />
          <path d="M1 11c3-1 5-1 7 0l-1 5c-2-1-4-1-7 0z" fill="#20a0f0" />
          <path d="M9 11c3 1 5 1 8 0l-1 5c-3 1-5 1-8 0z" fill="#ffc820" />
        </svg>
      </button>
      <div className="ml-[22px] flex w-[95px] shrink-0 items-start gap-[7px]">
        <svg viewBox="0 0 16 16" className="size-4"><path d="M1 1h14v14H1z" fill="#1d4f86" stroke="#9cc4ea" /><path d="M3 3h6v4H3zM6 7h6v4H6z" fill="#cfe4ff" stroke="#123" /></svg>
        <svg viewBox="0 0 16 16" className="size-4"><path d="M0 0h16v16H0z" fill="#f0a020" /><circle cx="8" cy="8" r="5" fill="#fff" stroke="#a06000" /><path d="M8 5v3h3" fill="none" stroke="#000" /></svg>
        <svg viewBox="0 0 16 16" className="size-4"><path d="M0 1h16v13H0z" fill="#5aa0e0" /><path d="M0 11h16v3H0z" fill="#1c3c6c" /></svg>
        <span className="ml-2.5 text-[14px] leading-[6px]">»</span>
      </div>
      <ul className="ml-0.5 flex gap-1">
        {TASKS.map(([t, kind], i) => (
          <li key={t}>
            <button
              className={`flex h-7 w-[156px] items-center gap-1 rounded-xs border px-2 whitespace-pre ${
                i === 1 ? "border-[#555] bg-[#101010]" : "border-[#787878] bg-linear-to-b from-[#707070] to-[#202020]"
              }`}
            >
              {kind === "sol" ? <Burst /> : kind === "globe" ? <Globe /> : <IeIcon />}
              {t}
            </button>
          </li>
        ))}
      </ul>
      <div className="ml-auto flex items-center pr-3">
        <span className="mr-2">CS</span>
        <Tray />
        <svg viewBox="0 0 16 16" className="size-4">
          <path d="M1 6h3l4-4v12l-4-4H1z" fill="#fff" />
          <path d="M10 5q2 3 0 6M12 3q4 5 0 10" fill="none" stroke="#b0f0c0" />
        </svg>
        <span className="ml-1.5">15:45</span>
      </div>
    </footer>
  );
}

const VOLUMES = nums(`0 0 0 0 4 26 33 21 48 18 68 34 23 10 400 87 106 150 176 319 106 139 200 168 174 213 305 271 366 284 231 255 249 161
196 209 201 181 181 130 150 146 340 238 243 205 244 175 223 256 217 171 119 41 50 60 38 35 39`);
const BIDS: Record<string, number> = {
  "785.8": 8, "785.7": 29, "785.6": 43, "785.5": 60, "785.4": 45, "784.6": 1, "783.5": 1, "783.4": 1, "783.3": 1, "783.0": 1, "782.9": 1, "782.8": 1,
};
const ASKS: Record<string, number> = { "786.3": 50, "786.2": 52, "786.1": 65, "786.0": 43, "785.9": 11 };

function Spin() {
  return (
    <div className="flex w-3.5 shrink-0 flex-col">
      {["M1 4l3-3 3 3z", "M1 1l3 3 3-3z"].map((d, i) => (
        <button key={d} aria-label={i ? "Decrease" : "Increase"} className="flex h-2 items-center justify-center border border-[#b8bcc4] bg-[#ececf0]">
          <svg className="h-[5px] w-2"><path d={d} fill="#5a6ea8" /></svg>
        </button>
      ))}
    </div>
  );
}

function NumberField({ id, value, className, left }: { id: string; value: string; className: string; left?: boolean }) {
  return (
    <div className={`flex h-5 items-center border border-[#a0a4ac] bg-white pr-0.5 ${className}`}>
      <input id={id} defaultValue={value} className={`w-full min-w-0 px-0.5 outline-none ${left ? "" : "text-right"}`} />
      <Spin />
    </div>
  );
}

function GhostButton({ children, className = "flex-1" }: { children: ReactNode; className?: string }) {
  return (
    <button disabled className={`h-[21px] rounded-xs border border-[#adb2b5] bg-[#f4f4f4] whitespace-nowrap text-[#a0a0a0] ${className}`}>{children}</button>
  );
}

function DomToolbar() {
  return (
    <div className="flex h-6 items-center justify-between bg-linear-to-b from-white to-[#f0f0f0]">
      <div className="flex items-center gap-2">
        <button aria-label="Pin" className="flex h-[22px] w-[23px] items-center justify-center border border-[#3399ff]">
          <svg viewBox="0 0 16 16" className="size-4"><path d="M1 7l11-3 2 8-12 3z" fill="#ffcc30" /><path d="M8 9l3-4M9 2l5 3-2 2-4-2z" stroke="#d02010" fill="#e04020" /></svg>
        </button>
        <button aria-label="Calculator" className="ml-1">
          <svg viewBox="0 0 16 16" className="size-4"><path d="M2 0h12v16H2z" fill="#b8d0f0" stroke="#5070a8" /><path d="M4 2h8v2H4z" fill="#e03020" /><path d="M4 7h8M4 10h8M4 13h8" stroke="#304878" strokeWidth="2" strokeDasharray="2 1" /></svg>
        </button>
        <button aria-label="Settings">
          <svg viewBox="0 0 16 16" className="size-4"><circle cx="8" cy="8" r="6" fill="#7c9cc8" stroke="#4a6490" strokeWidth="2" strokeDasharray="2 1" /><circle cx="8" cy="8" r="2.5" fill="#fff" stroke="#4a6490" /></svg>
        </button>
        <button aria-label="Globe">
          <svg viewBox="0 0 16 16" className="size-4"><ellipse cx="8" cy="9" rx="7" ry="4" fill="#dde" stroke="#7080d0" /><path d="M5 13L9 2l3 9M8 4v8" fill="none" stroke="#5060c0" strokeWidth="1.5" /></svg>
        </button>
        <span className="h-3.5 w-px bg-[#b0b0b0]" />
        <button aria-label="Help order">
          <svg viewBox="0 0 16 16" className="size-4"><path d="M1 2h6v8H1zM4 6h7v9H4z" fill="#fff" stroke="#405080" /><path d="M6 9h3l-2 4h3" fill="none" stroke="#d02020" strokeWidth="1.5" /><path d="M11 2c3-2 5 1 2 3v2" fill="none" stroke="#3030c0" strokeWidth="1.5" /></svg>
        </button>
        <button aria-label="Ticket" className="ml-1">
          <svg viewBox="0 0 16 16" className="size-4"><path d="M1 10l7-9 3 2 1 11-4 0-2-4z" fill="#c83030" stroke="#801818" /><path d="M4 9l6-5M7 12l4-4" stroke="#f0c0c0" /></svg>
        </button>
        <button aria-label="Clock">
          <svg viewBox="0 0 16 16" className="size-4"><circle cx="8" cy="8" r="7" fill="#3088c8" stroke="#1c4c7c" /><path d="M8 3v5h4" fill="none" stroke="#fff" strokeWidth="1.5" /></svg>
        </button>
        <button aria-label="Protection">
          <svg viewBox="0 0 16 16" className="size-4"><path d="M1 2q4 2 7-1 3 3 7 1-1 9-7 13-6-4-7-13z" fill="#b8c0cc" /><path d="M4 5h8q-1 5-4 8-3-3-4-8z" fill="#3c68b0" /></svg>
        </button>
        <button aria-label="Links">
          <svg viewBox="0 0 16 16" className="size-4"><path d="M8 3L3 13h10z" fill="none" stroke="#888" strokeWidth="1.5" /><circle cx="8" cy="3" r="2.5" fill="#3c78c8" /><circle cx="3" cy="13" r="2.5" fill="#d04020" /><circle cx="13" cy="13" r="2.5" fill="#309050" /></svg>
        </button>
        <button aria-label="Hand" className="flex items-center gap-1.5">
          <svg viewBox="0 0 16 16" className="size-4"><path d="M0 6l6-2 5 0 1 5-5 4-3-3 2-2-6 0z" fill="#e08850" stroke="#a05020" strokeWidth="0.7" /><path d="M11 3l4 1v6l-3 1z" fill="#2c5890" /></svg>
          <svg className="h-1 w-1.5"><path d="M0 0h6L3 4z" /></svg>
        </button>
        <span className="h-3.5 w-px bg-[#b0b0b0]" />
        <button aria-label="Chart">
          <svg viewBox="0 0 16 16" className="size-4"><path d="M0 2h16v12H0z" fill="#d8dce4" stroke="#606870" /><path d="M2 4h12v8H2z" fill="#fff" /><path d="M3 10l3-4 3 3 4-4" fill="none" stroke="#208040" strokeWidth="1.5" /></svg>
        </button>
        <button aria-label="Depth" className="-ml-1 flex h-[22px] w-[23px] items-center justify-center border border-[#3399ff]">
          <svg viewBox="0 0 16 16" className="size-4"><path d="M1 1h15v5H1z" fill="#d82018" /><path d="M1 6h11v5H1z" fill="#f0c040" /><path d="M1 11h8v5H1z" fill="#60a030" /></svg>
        </button>
      </div>
      <svg className="h-3 w-4"><path d="M6 5h7M6 8h7l-3.500 4z" stroke="#000" /></svg>
    </div>
  );
}

function DomTable() {
  return (
    <table className="mt-[7px] w-full table-fixed border-collapse border-t-2 border-l border-[#707070] text-center">
      <colgroup>
        <col className="w-[12%]" />
        <col className="w-[12%]" />
        <col className="w-[26%]" />
        <col className="w-[12%]" />
        <col className="w-[12%]" />
        <col className="w-[26%]" />
      </colgroup>
      <thead>
        <tr className="h-[22px]">
          <th colSpan={2} className="bg-[#006400] p-0 font-normal text-white">Bid</th>
          <th aria-label="Price" className="p-0"><svg className="mx-auto h-[5px] w-2.5"><path d="M0 5h10L5 0z" /></svg></th>
          <th colSpan={2} className="bg-[#800000] p-0 font-normal text-white">Ask</th>
          <th className="p-0 font-normal">Vol</th>
        </tr>
      </thead>
      <tbody className="font-bold">
        {VOLUMES.map((v, i) => {
          const price = (786.4 - i * 0.1).toFixed(1);
          return (
            <tr
              key={price}
              className={`h-[15px] border-b text-[13px] leading-[14px] ${price === "785.9" ? "border-dashed border-[#800000]" : "border-[#c0c0c0]"}`}
            >
              <td className="bg-white p-0" />
              <td className="bg-[#006400] p-0 text-white">{BIDS[price]}</td>
              <td
                className={`p-0 ${price === "785.8" ? "bg-[#80bfff]" : "bg-[#d3d3d3]"} ${
                  price === "785.9" ? "text-[#ff0000]" : price === "785.7" ? "text-[#008000]" : "text-black"
                }`}
              >
                {price}
              </td>
              <td className="bg-[#800000] p-0 text-white">{ASKS[price]}</td>
              <td className="bg-white p-0" />
              <td className="bg-black p-0">
                <div className="relative h-[14px] pr-0.5 text-right text-[#ff0000]">
                  <div className="absolute inset-y-0 left-0 bg-[#0000ff]" style={{ width: `${v / 4}%` }} />
                  <span className="relative">{v || ""}</span>
                </div>
              </td>
            </tr>
          );
        })}
      </tbody>
      <tfoot>
        <tr className="h-6">
          <td colSpan={2} className="bg-[#006400] p-0 text-white">195</td>
          <td className="p-0"><svg className="mx-auto h-[5px] w-2.5"><path d="M0 0h10L5 5z" /></svg></td>
          <td colSpan={2} className="bg-[#800000] p-0 text-white">245</td>
          <td className="p-0" />
        </tr>
      </tfoot>
    </table>
  );
}

function DomWindow() {
  return (
    <section className="flex w-[345px] shrink-0 flex-col rounded-t-md border-x-2 border-l-black border-r-[#20c0e0] bg-[#b9d1ea] px-1.5 pb-2 text-[#111]">
      <header className="flex h-7 items-center justify-between pt-1.5 pr-0.5 text-[12px] text-black">
        <h1 className="flex items-center gap-1"><Burst />RLM-MH2 - Depth of Market</h1>
        <div className="flex gap-1">
          <button aria-label="Minimize" className="flex h-[15px] w-7 items-center justify-center rounded-xs border border-[#60748c] bg-[#b4cae2]">
            <svg className="h-2.5 w-3"><rect x="1.500" y="5.500" width="9" height="3" fill="#fff" stroke="#4a5568" /></svg>
          </button>
          <button aria-label="Maximize" className="flex h-[15px] w-7 items-center justify-center rounded-xs border border-[#60748c] bg-[#b4cae2]">
            <svg className="h-2.5 w-3"><rect x="2" y="1" width="8" height="7" fill="none" stroke="#4a5568" strokeWidth="2" /></svg>
          </button>
          <button aria-label="Close" className="flex h-[15px] w-7 items-center justify-center rounded-xs border border-[#5a1010] bg-linear-to-b from-[#dc9080] to-[#b83020]">
            <svg className="h-2.5 w-3"><path d="M2 1l8 8M10 1l-8 8" stroke="#fff" strokeWidth="2.500" /></svg>
          </button>
        </div>
      </header>
      <div className="flex flex-1 flex-col bg-[#f0f0f0] text-[11px]">
        <DomToolbar />
        <div className="flex flex-1 flex-col px-1 pt-[5px]">
          <div className="flex flex-col gap-2">
            <div className="flex h-[21px] items-center">
              <label htmlFor="qty" className="w-7">Qty:</label>
              <NumberField id="qty" value="1" className="w-[51px]" />
              <label htmlFor="pl" className="ml-auto w-[57px]">Open P/L:</label>
              <input id="pl" defaultValue="$ 0,00" className="h-5 w-[139px] border border-[#dde] bg-white pr-0.5 text-right" />
            </div>
            <div className="flex h-[21px] items-center">
              <label htmlFor="pos" className="w-[30px]">Pos:</label>
              <input id="pos" defaultValue="0" className="h-5 w-[104px] border border-[#dde] bg-white pr-0.5 text-right" />
              <GhostButton className="ml-auto w-[91px]">Exit at Mkt &amp; Cxl</GhostButton>
              <GhostButton className="ml-2 w-[81px]">Reverse &amp; Cxl</GhostButton>
            </div>
            <div className="flex h-[21px] items-center">
              <label htmlFor="be" className="flex-1">Breakeven factor:</label>
              <NumberField id="be" value="0.0" className="w-[140px]" left />
              <GhostButton className="ml-2 w-[67px]">Breakeven</GhostButton>
            </div>
            <div className="flex h-[21px] items-center">
              <label htmlFor="sq" className="w-[61px]">Scale Qty:</label>
              <NumberField id="sq" value="1" className="w-[45px]" />
              <GhostButton className="ml-auto w-[92px]">Scale Out</GhostButton>
              <GhostButton className="ml-2 w-[92px]">Scale In</GhostButton>
            </div>
            <div className="flex gap-2">
              <GhostButton>Cancel Bids</GhostButton>
              <GhostButton>Cancel All</GhostButton>
              <GhostButton>Cancel Offers</GhostButton>
            </div>
          </div>
          <DomTable />
          <div className="mt-[9px] flex gap-2">
            {["Buy Mkt", "Go to Last", "Sell Mkt"].map((t) => (
              <button key={t} className="h-[21px] flex-1 rounded-xs border border-[#707070] bg-linear-to-b from-[#f4f4f4] to-[#d0d0d0]">{t}</button>
            ))}
          </div>
        </div>
        <div className="mt-1.5 flex h-[22px] items-center border-t border-[#909090] bg-[#f0ecea] px-1 text-[12px]">
          <span className="mr-1.5 size-[11px] rounded-full border border-[#006000] bg-[#00ff00]" />
          Connected
          <span className="mr-4 ml-auto">15:45:03</span>
        </div>
      </div>
    </section>
  );
}

export default function App() {
  return (
    <main className={`flex min-h-screen bg-black ${UI}`}>
      <div className="flex w-1/2 min-w-0 flex-col">
        <LeftWindow />
        <Taskbar />
      </div>
      <MiddleWindow />
      <DomWindow />
    </main>
  );
}
